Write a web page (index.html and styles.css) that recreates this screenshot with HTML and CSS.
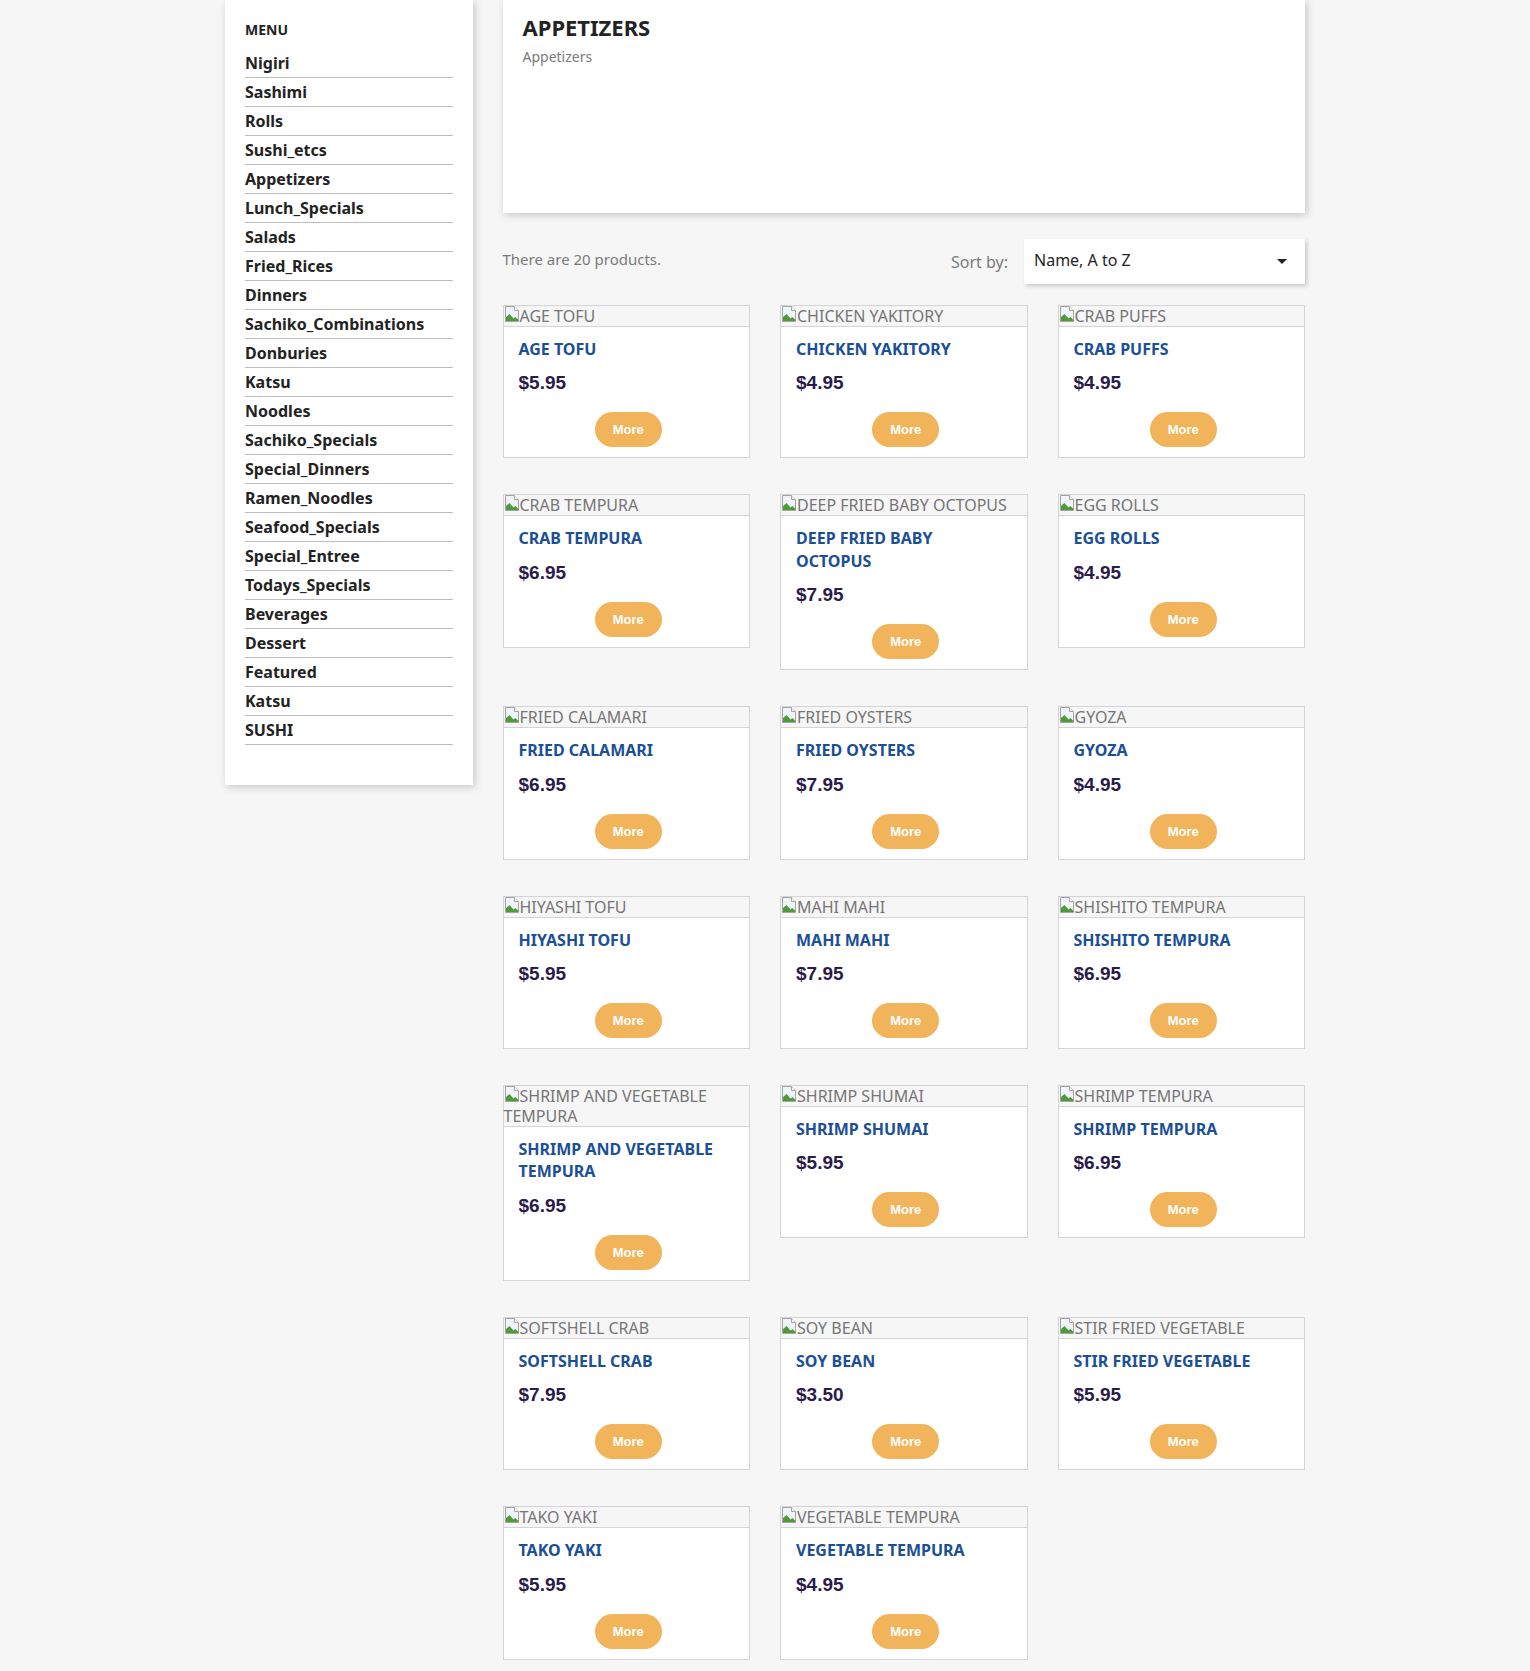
FILE: index.html
```html
<!DOCTYPE html>
<html lang="en">
<head>
<meta charset="utf-8">
<title>Appetizers</title>
<link rel="stylesheet" href="styles.css">
</head>
<body>
<div class="container">
  <aside class="left-col">
    <div class="sidebar">
      <h4 class="menu-title">Menu</h4>
      <ul class="menu-list">
        <li><a href="#">Nigiri</a></li>
        <li><a href="#">Sashimi</a></li>
        <li><a href="#">Rolls</a></li>
        <li><a href="#">Sushi_etcs</a></li>
        <li><a href="#">Appetizers</a></li>
        <li><a href="#">Lunch_Specials</a></li>
        <li><a href="#">Salads</a></li>
        <li><a href="#">Fried_Rices</a></li>
        <li><a href="#">Dinners</a></li>
        <li><a href="#">Sachiko_Combinations</a></li>
        <li><a href="#">Donburies</a></li>
        <li><a href="#">Katsu</a></li>
        <li><a href="#">Noodles</a></li>
        <li><a href="#">Sachiko_Specials</a></li>
        <li><a href="#">Special_Dinners</a></li>
        <li><a href="#">Ramen_Noodles</a></li>
        <li><a href="#">Seafood_Specials</a></li>
        <li><a href="#">Special_Entree</a></li>
        <li><a href="#">Todays_Specials</a></li>
        <li><a href="#">Beverages</a></li>
        <li><a href="#">Dessert</a></li>
        <li><a href="#">Featured</a></li>
        <li><a href="#">Katsu</a></li>
        <li><a href="#">SUSHI</a></li>
      </ul>
    </div>
  </aside>

  <main class="main-col">
    <div class="cat-header">
      <h1 class="cat-title">Appetizers</h1>
      <div class="cat-sub">Appetizers</div>
    </div>

    <div class="sort-row">
      <p class="count">There are 20 products.</p>
      <div class="sort">
        <span class="sort-label">Sort by:</span>
        <div class="select">
          <span>Name, A to Z</span>
          <span class="caret"></span>
        </div>
      </div>
    </div>

    <div class="products">
      <article class="card"><div class="thumb"><svg class="bi" viewBox="0 0 16 16" width="16" height="16"><path d="M1.5 .5h9l4 4v11h-13z" fill="#eef4fa" stroke="#a3a3a3"/><path d="M10.5 .5v4h4" fill="#fff" stroke="#a3a3a3"/><path d="M2 15v-4l3.5-3 4 4.5 2-1.5 3 3v1z" fill="#4f9b3a"/></svg>AGE TOFU</div><div class="body"><h2 class="name">Age Tofu</h2><div class="price">$5.95</div><div class="actions"><a class="more" href="#">More</a></div></div></article>

      <article class="card"><div class="thumb"><svg class="bi" viewBox="0 0 16 16" width="16" height="16"><path d="M1.5 .5h9l4 4v11h-13z" fill="#eef4fa" stroke="#a3a3a3"/><path d="M10.5 .5v4h4" fill="#fff" stroke="#a3a3a3"/><path d="M2 15v-4l3.5-3 4 4.5 2-1.5 3 3v1z" fill="#4f9b3a"/></svg>CHICKEN YAKITORY</div><div class="body"><h2 class="name">Chicken Yakitory</h2><div class="price">$4.95</div><div class="actions"><a class="more" href="#">More</a></div></div></article>

      <article class="card"><div class="thumb"><svg class="bi" viewBox="0 0 16 16" width="16" height="16"><path d="M1.5 .5h9l4 4v11h-13z" fill="#eef4fa" stroke="#a3a3a3"/><path d="M10.5 .5v4h4" fill="#fff" stroke="#a3a3a3"/><path d="M2 15v-4l3.5-3 4 4.5 2-1.5 3 3v1z" fill="#4f9b3a"/></svg>CRAB PUFFS</div><div class="body"><h2 class="name">Crab Puffs</h2><div class="price">$4.95</div><div class="actions"><a class="more" href="#">More</a></div></div></article>

      <article class="card"><div class="thumb"><svg class="bi" viewBox="0 0 16 16" width="16" height="16"><path d="M1.5 .5h9l4 4v11h-13z" fill="#eef4fa" stroke="#a3a3a3"/><path d="M10.5 .5v4h4" fill="#fff" stroke="#a3a3a3"/><path d="M2 15v-4l3.5-3 4 4.5 2-1.5 3 3v1z" fill="#4f9b3a"/></svg>CRAB TEMPURA</div><div class="body"><h2 class="name">Crab Tempura</h2><div class="price">$6.95</div><div class="actions"><a class="more" href="#">More</a></div></div></article>

      <article class="card"><div class="thumb"><svg class="bi" viewBox="0 0 16 16" width="16" height="16"><path d="M1.5 .5h9l4 4v11h-13z" fill="#eef4fa" stroke="#a3a3a3"/><path d="M10.5 .5v4h4" fill="#fff" stroke="#a3a3a3"/><path d="M2 15v-4l3.5-3 4 4.5 2-1.5 3 3v1z" fill="#4f9b3a"/></svg>DEEP FRIED BABY OCTOPUS</div><div class="body"><h2 class="name">Deep Fried Baby Octopus</h2><div class="price">$7.95</div><div class="actions"><a class="more" href="#">More</a></div></div></article>

      <article class="card"><div class="thumb"><svg class="bi" viewBox="0 0 16 16" width="16" height="16"><path d="M1.5 .5h9l4 4v11h-13z" fill="#eef4fa" stroke="#a3a3a3"/><path d="M10.5 .5v4h4" fill="#fff" stroke="#a3a3a3"/><path d="M2 15v-4l3.5-3 4 4.5 2-1.5 3 3v1z" fill="#4f9b3a"/></svg>EGG ROLLS</div><div class="body"><h2 class="name">Egg Rolls</h2><div class="price">$4.95</div><div class="actions"><a class="more" href="#">More</a></div></div></article>

      <article class="card"><div class="thumb"><svg class="bi" viewBox="0 0 16 16" width="16" height="16"><path d="M1.5 .5h9l4 4v11h-13z" fill="#eef4fa" stroke="#a3a3a3"/><path d="M10.5 .5v4h4" fill="#fff" stroke="#a3a3a3"/><path d="M2 15v-4l3.5-3 4 4.5 2-1.5 3 3v1z" fill="#4f9b3a"/></svg>FRIED CALAMARI</div><div class="body"><h2 class="name">Fried Calamari</h2><div class="price">$6.95</div><div class="actions"><a class="more" href="#">More</a></div></div></article>

      <article class="card"><div class="thumb"><svg class="bi" viewBox="0 0 16 16" width="16" height="16"><path d="M1.5 .5h9l4 4v11h-13z" fill="#eef4fa" stroke="#a3a3a3"/><path d="M10.5 .5v4h4" fill="#fff" stroke="#a3a3a3"/><path d="M2 15v-4l3.5-3 4 4.5 2-1.5 3 3v1z" fill="#4f9b3a"/></svg>FRIED OYSTERS</div><div class="body"><h2 class="name">Fried Oysters</h2><div class="price">$7.95</div><div class="actions"><a class="more" href="#">More</a></div></div></article>

      <article class="card"><div class="thumb"><svg class="bi" viewBox="0 0 16 16" width="16" height="16"><path d="M1.5 .5h9l4 4v11h-13z" fill="#eef4fa" stroke="#a3a3a3"/><path d="M10.5 .5v4h4" fill="#fff" stroke="#a3a3a3"/><path d="M2 15v-4l3.5-3 4 4.5 2-1.5 3 3v1z" fill="#4f9b3a"/></svg>GYOZA</div><div class="body"><h2 class="name">Gyoza</h2><div class="price">$4.95</div><div class="actions"><a class="more" href="#">More</a></div></div></article>

      <article class="card"><div class="thumb"><svg class="bi" viewBox="0 0 16 16" width="16" height="16"><path d="M1.5 .5h9l4 4v11h-13z" fill="#eef4fa" stroke="#a3a3a3"/><path d="M10.5 .5v4h4" fill="#fff" stroke="#a3a3a3"/><path d="M2 15v-4l3.5-3 4 4.5 2-1.5 3 3v1z" fill="#4f9b3a"/></svg>HIYASHI TOFU</div><div class="body"><h2 class="name">Hiyashi Tofu</h2><div class="price">$5.95</div><div class="actions"><a class="more" href="#">More</a></div></div></article>

      <article class="card"><div class="thumb"><svg class="bi" viewBox="0 0 16 16" width="16" height="16"><path d="M1.5 .5h9l4 4v11h-13z" fill="#eef4fa" stroke="#a3a3a3"/><path d="M10.5 .5v4h4" fill="#fff" stroke="#a3a3a3"/><path d="M2 15v-4l3.5-3 4 4.5 2-1.5 3 3v1z" fill="#4f9b3a"/></svg>MAHI MAHI</div><div class="body"><h2 class="name">Mahi Mahi</h2><div class="price">$7.95</div><div class="actions"><a class="more" href="#">More</a></div></div></article>

      <article class="card"><div class="thumb"><svg class="bi" viewBox="0 0 16 16" width="16" height="16"><path d="M1.5 .5h9l4 4v11h-13z" fill="#eef4fa" stroke="#a3a3a3"/><path d="M10.5 .5v4h4" fill="#fff" stroke="#a3a3a3"/><path d="M2 15v-4l3.5-3 4 4.5 2-1.5 3 3v1z" fill="#4f9b3a"/></svg>SHISHITO TEMPURA</div><div class="body"><h2 class="name">Shishito Tempura</h2><div class="price">$6.95</div><div class="actions"><a class="more" href="#">More</a></div></div></article>

      <article class="card"><div class="thumb"><svg class="bi" viewBox="0 0 16 16" width="16" height="16"><path d="M1.5 .5h9l4 4v11h-13z" fill="#eef4fa" stroke="#a3a3a3"/><path d="M10.5 .5v4h4" fill="#fff" stroke="#a3a3a3"/><path d="M2 15v-4l3.5-3 4 4.5 2-1.5 3 3v1z" fill="#4f9b3a"/></svg>SHRIMP AND VEGETABLE TEMPURA</div><div class="body"><h2 class="name">Shrimp and Vegetable Tempura</h2><div class="price">$6.95</div><div class="actions"><a class="more" href="#">More</a></div></div></article>

      <article class="card"><div class="thumb"><svg class="bi" viewBox="0 0 16 16" width="16" height="16"><path d="M1.5 .5h9l4 4v11h-13z" fill="#eef4fa" stroke="#a3a3a3"/><path d="M10.5 .5v4h4" fill="#fff" stroke="#a3a3a3"/><path d="M2 15v-4l3.5-3 4 4.5 2-1.5 3 3v1z" fill="#4f9b3a"/></svg>SHRIMP SHUMAI</div><div class="body"><h2 class="name">Shrimp Shumai</h2><div class="price">$5.95</div><div class="actions"><a class="more" href="#">More</a></div></div></article>

      <article class="card"><div class="thumb"><svg class="bi" viewBox="0 0 16 16" width="16" height="16"><path d="M1.5 .5h9l4 4v11h-13z" fill="#eef4fa" stroke="#a3a3a3"/><path d="M10.5 .5v4h4" fill="#fff" stroke="#a3a3a3"/><path d="M2 15v-4l3.5-3 4 4.5 2-1.5 3 3v1z" fill="#4f9b3a"/></svg>SHRIMP TEMPURA</div><div class="body"><h2 class="name">Shrimp Tempura</h2><div class="price">$6.95</div><div class="actions"><a class="more" href="#">More</a></div></div></article>

      <article class="card"><div class="thumb"><svg class="bi" viewBox="0 0 16 16" width="16" height="16"><path d="M1.5 .5h9l4 4v11h-13z" fill="#eef4fa" stroke="#a3a3a3"/><path d="M10.5 .5v4h4" fill="#fff" stroke="#a3a3a3"/><path d="M2 15v-4l3.5-3 4 4.5 2-1.5 3 3v1z" fill="#4f9b3a"/></svg>SOFTSHELL CRAB</div><div class="body"><h2 class="name">Softshell Crab</h2><div class="price">$7.95</div><div class="actions"><a class="more" href="#">More</a></div></div></article>

      <article class="card"><div class="thumb"><svg class="bi" viewBox="0 0 16 16" width="16" height="16"><path d="M1.5 .5h9l4 4v11h-13z" fill="#eef4fa" stroke="#a3a3a3"/><path d="M10.5 .5v4h4" fill="#fff" stroke="#a3a3a3"/><path d="M2 15v-4l3.5-3 4 4.5 2-1.5 3 3v1z" fill="#4f9b3a"/></svg>SOY BEAN</div><div class="body"><h2 class="name">Soy Bean</h2><div class="price">$3.50</div><div class="actions"><a class="more" href="#">More</a></div></div></article>

      <article class="card"><div class="thumb"><svg class="bi" viewBox="0 0 16 16" width="16" height="16"><path d="M1.5 .5h9l4 4v11h-13z" fill="#eef4fa" stroke="#a3a3a3"/><path d="M10.5 .5v4h4" fill="#fff" stroke="#a3a3a3"/><path d="M2 15v-4l3.5-3 4 4.5 2-1.5 3 3v1z" fill="#4f9b3a"/></svg>STIR FRIED VEGETABLE</div><div class="body"><h2 class="name">Stir Fried Vegetable</h2><div class="price">$5.95</div><div class="actions"><a class="more" href="#">More</a></div></div></article>

      <article class="card"><div class="thumb"><svg class="bi" viewBox="0 0 16 16" width="16" height="16"><path d="M1.5 .5h9l4 4v11h-13z" fill="#eef4fa" stroke="#a3a3a3"/><path d="M10.5 .5v4h4" fill="#fff" stroke="#a3a3a3"/><path d="M2 15v-4l3.5-3 4 4.5 2-1.5 3 3v1z" fill="#4f9b3a"/></svg>TAKO YAKI</div><div class="body"><h2 class="name">Tako Yaki</h2><div class="price">$5.95</div><div class="actions"><a class="more" href="#">More</a></div></div></article>

      <article class="card"><div class="thumb"><svg class="bi" viewBox="0 0 16 16" width="16" height="16"><path d="M1.5 .5h9l4 4v11h-13z" fill="#eef4fa" stroke="#a3a3a3"/><path d="M10.5 .5v4h4" fill="#fff" stroke="#a3a3a3"/><path d="M2 15v-4l3.5-3 4 4.5 2-1.5 3 3v1z" fill="#4f9b3a"/></svg>VEGETABLE TEMPURA</div><div class="body"><h2 class="name">Vegetable Tempura</h2><div class="price">$4.95</div><div class="actions"><a class="more" href="#">More</a></div></div></article>
    </div>
  </main>
</div>
</body>
</html>
```

FILE: styles.css
```css
* { box-sizing: border-box; }

body {
  margin: 0;
  background: #f6f6f6;
  font-family: "Noto Sans", "DejaVu Sans", sans-serif;
  color: #232323;
}

.container {
  width: 1110px;
  margin: 0 auto;
  display: flex;
  align-items: flex-start;
}

.left-col {
  flex: none;
  width: 277.5px;
  padding: 0 15px;
}

.main-col {
  flex: none;
  width: 832.5px;
  padding: 0 15px;
}

/* Sidebar menu */
.sidebar {
  background: #fff;
  box-shadow: 2px 2px 8px 0 rgba(0, 0, 0, 0.2);
  padding: 20px 20px 40px;
}

.menu-title {
  margin: 0 0 10px;
  font-size: 14px;
  line-height: 19px;
  font-weight: 700;
  text-transform: uppercase;
  color: #232323;
}

.menu-list {
  list-style: none;
  margin: 0;
  padding: 0;
}

.menu-list li {
  border-bottom: 1px solid #bdbdbd;
}

.menu-list a {
  display: block;
  font-size: 16px;
  line-height: 28px;
  font-weight: 700;
  color: #232323;
  text-decoration: none;
}

/* Category header */
.cat-header {
  background: #fff;
  box-shadow: 2px 2px 8px 0 rgba(0, 0, 0, 0.2);
  height: 213px;
  padding: 14px 20px;
}

.cat-title {
  margin: 0 0 6px;
  font-size: 22px;
  line-height: 26.4px;
  font-weight: 700;
  text-transform: uppercase;
  color: #232323;
}

.cat-sub {
  font-size: 14px;
  line-height: 21px;
  color: #7a7a7a;
}

/* Sort row */
.sort-row {
  display: flex;
  justify-content: space-between;
  align-items: center;
  margin-top: 26px;
  height: 45px;
}

.count {
  align-self: flex-start;
  margin: 9px 0 0;
  font-size: 15px;
  line-height: 22px;
  color: #7a7a7a;
}

.sort {
  display: flex;
  align-items: center;
}

.sort-label {
  font-size: 16px;
  color: #7a7a7a;
  margin-right: 16px;
}

.select {
  width: 281px;
  height: 45px;
  background: #fff;
  box-shadow: 2px 2px 4px 0 rgba(0, 0, 0, 0.2);
  display: flex;
  align-items: center;
  justify-content: space-between;
  padding: 0 18px 4px 10px;
  font-size: 16px;
  color: #232323;
}

.caret {
  width: 0;
  height: 0;
  margin-top: 4px;
  border-left: 5px solid transparent;
  border-right: 5px solid transparent;
  border-top: 5px solid #232323;
}

/* Products */
.products {
  display: grid;
  grid-template-columns: repeat(3, 247.5px);
  column-gap: 30px;
  row-gap: 36px;
  align-items: start;
  margin-top: 21px;
}

.card {
  background: #fff;
  border: 1px solid #d4d4d4;
}

.thumb {
  background: #f6f6f6;
  border-bottom: 1px solid #d4d4d4;
  font-size: 16px;
  line-height: 20px;
  color: #757575;
}

.bi {
  vertical-align: baseline;
  display: inline-block;
}

.body {
  padding: 10px 15px 10px;
}

.name {
  margin: 0;
  padding-top: 1px;
  font-size: 16px;
  line-height: 22.4px;
  font-weight: 700;
  text-transform: uppercase;
  color: #1b4f96;
}

.price {
  margin-top: 11px;
  font-family: "Liberation Sans", Arial, sans-serif;
  font-size: 19px;
  line-height: 23px;
  font-weight: 700;
  color: #2a1b4c;
}

.actions {
  margin-top: 18px;
  padding-left: 4px;
  text-align: center;
}

.more {
  display: inline-block;
  height: 35px;
  line-height: 35px;
  padding: 0 18px;
  border-radius: 18px;
  background: #f1b45a;
  color: #fff;
  font-family: "Liberation Sans", Arial, sans-serif;
  font-size: 13px;
  font-weight: 700;
  text-decoration: none;
}
```
